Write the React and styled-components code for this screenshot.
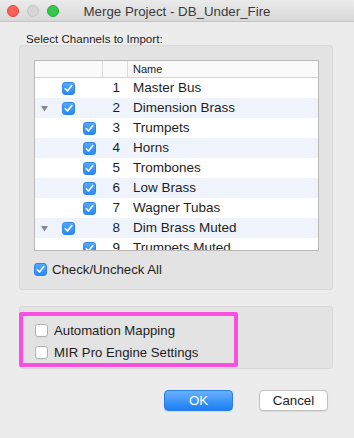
import React from "react";
import styled, { createGlobalStyle } from "styled-components";

const Global = createGlobalStyle`
  html, body { margin: 0; padding: 0; background: #ececec; }
  body { font-family: "Liberation Sans", Arial, sans-serif; color: #1e1e1e; }
  * { box-sizing: border-box; }
`;

const Window = styled.div`
  width: 354px;
  height: 438px;
  background: #ececec;
  display: flex;
  flex-direction: column;
  overflow: hidden;
`;

const TitleBar = styled.div`
  height: 22px;
  flex: none;
  display: grid;
  grid-template-columns: 1fr auto 1fr;
  align-items: center;
  background: linear-gradient(#ebebeb, #d8d8d8);
  border-bottom: 1px solid #c4c4c4;
`;

const Lights = styled.div`
  display: flex;
  gap: 8px;
  padding-left: 7px;
`;

const Light = styled.span`
  width: 12px;
  height: 12px;
  border-radius: 50%;
  background: ${(p) => p.$color};
  border: 1px solid ${(p) => p.$edge};
`;

const Title = styled.div`
  font-size: 13.3px;
  color: #3a3a3a;
  padding-top: 1px;
`;

const Content = styled.div`
  flex: 1;
  display: flex;
  flex-direction: column;
  padding: 10px 21px 0 19px;
`;

const Label = styled.div`
  font-size: 11.6px;
  padding-left: 7px;
  height: 13px;
  line-height: 13px;
`;

const Group = styled.div`
  margin-top: ${(p) => p.$mt}px;
  height: ${(p) => p.$h}px;
  background: #e3e3e3;
  border: 1px solid #d9d9d9;
  border-radius: 3px;
  display: flex;
  flex-direction: column;
  padding: ${(p) => p.$pad};
`;

const Table = styled.div`
  height: 191px;
  background: #fff;
  border: 1px solid #b9b9b9;
  overflow: hidden;
  display: flex;
  flex-direction: column;
`;

const Grid = styled.div`
  display: grid;
  grid-template-columns: 68px 25px 1fr;
  height: ${(p) => p.$h}px;
  flex: none;
  align-items: center;
  background: ${(p) => (p.$alt ? "#eef3fc" : "#fff")};
`;

const HeadRow = styled(Grid)`
  background: #fafafa;
  border-bottom: 1px solid #d4d4d4;
  font-size: 11px;
  color: #222;
`;

const HeadCell = styled.div`
  height: 100%;
  display: flex;
  align-items: center;
  padding-left: ${(p) => p.$pl || 0}px;
  border-right: ${(p) => (p.$sep ? "1px solid #dcdcdc" : "none")};
`;

const ToggleCell = styled.div`
  display: flex;
  align-items: center;
  height: 100%;
  position: relative;
`;

const Tri = styled.svg`
  position: absolute;
  left: 6px;
  top: 8px;
`;

const NumCell = styled.div`
  text-align: right;
  padding-right: 8px;
  font-size: 13.5px;
  line-height: 20px;
`;

const NameCell = styled.div`
  padding-left: 5px;
  font-size: 13.5px;
  line-height: 20px;
  white-space: nowrap;
`;

const Box = styled.span`
  width: 13px;
  height: 13px;
  flex: none;
  border-radius: 3px;
  display: inline-flex;
  align-items: center;
  justify-content: center;
  margin-left: ${(p) => p.$ml || 0}px;
  background: ${(p) => (p.$on ? "linear-gradient(#55a8fc, #2b89f6)" : "#fff")};
  border: 1px solid ${(p) => (p.$on ? "#2f86ea" : "#b3b3b3")};
  box-shadow: ${(p) => (p.$on ? "none" : "0 1px 0 rgba(0,0,0,0.04)")};
`;

const Check = () => (
  <svg width="9" height="9" viewBox="0 0 9 9">
    <path d="M1.3 4.8 L3.5 7 L7.8 1.6" fill="none" stroke="#fff" strokeWidth="1.6" strokeLinecap="round" strokeLinejoin="round" />
  </svg>
);

const CheckBox = ({ on, ml }) => (
  <Box $on={on} $ml={ml}>{on && <Check />}</Box>
);

const OptRow = styled.label`
  display: flex;
  align-items: center;
  gap: 6px;
  font-size: 13.2px;
  height: ${(p) => p.$h || 22}px;
`;

const CheckAllRow = styled(OptRow)`
  margin-top: 11px;
  gap: 5px;
`;

const Highlight = styled.div`
  width: 219px;
  height: 55px;
  border: 4px solid #f94fe0;
  border-radius: 2px;
  display: flex;
  flex-direction: column;
  padding: 4px 0 0 12px;
  margin-left: -1px;
`;

const Buttons = styled.div`
  display: flex;
  justify-content: flex-end;
  gap: 26px;
  margin-top: 21px;
  padding-right: 5px;
`;

const Button = styled.button`
  width: 69px;
  height: 21px;
  border-radius: 4px;
  font-family: inherit;
  font-size: 13.3px;
  padding: 0;
  color: ${(p) => (p.$primary ? "#fff" : "#222")};
  background: ${(p) => (p.$primary ? "linear-gradient(#69b1fb, #1a7ff5)" : "#fff")};
  border: 1px solid ${(p) => (p.$primary ? "#2a80e8" : "#c2c2c2")};
  box-shadow: 0 1px 1px rgba(0,0,0,0.08);
`;

const rows = [
  { n: 1, name: "Master Bus", level: 0 },
  { n: 2, name: "Dimension Brass", level: 0, tri: true },
  { n: 3, name: "Trumpets", level: 1 },
  { n: 4, name: "Horns", level: 1 },
  { n: 5, name: "Trombones", level: 1 },
  { n: 6, name: "Low Brass", level: 1 },
  { n: 7, name: "Wagner Tubas", level: 1 },
  { n: 8, name: "Dim Brass Muted", level: 0, tri: true },
  { n: 9, name: "Trumpets Muted", level: 1 },
];

export default function App() {
  return (
    <Window>
      <Global />
      <TitleBar>
        <Lights>
          <Light $color="#fc605b" $edge="#de4640" />
          <Light $color="#d6d6d6" $edge="#c4c4c4" />
          <Light $color="#34c84a" $edge="#27a83a" />
        </Lights>
        <Title>Merge Project - DB_Under_Fire</Title>
        <div />
      </TitleBar>
      <Content>
        <Label>Select Channels to Import:</Label>
        <Group $mt={0} $h={245} $pad="14px 13px 0 14px">
          <Table>
            <HeadRow $h={17}>
              <HeadCell $sep />
              <HeadCell $sep />
              <HeadCell $pl={5}>Name</HeadCell>
            </HeadRow>
            {rows.map((r, i) => (
              <Grid key={r.n} $h={20} $alt={i % 2 === 1}>
                <ToggleCell>
                  {r.tri && (
                    <Tri width="7" height="6" viewBox="0 0 7 6">
                      <polygon points="0,0 7,0 3.5,5.5" fill="#8a8a8a" />
                    </Tri>
                  )}
                  <CheckBox on ml={r.level ? 48 : 27} />
                </ToggleCell>
                <NumCell>{r.n}</NumCell>
                <NameCell>{r.name}</NameCell>
              </Grid>
            ))}
          </Table>
          <CheckAllRow $h={14}>
            <CheckBox on />
            Check/Uncheck All
          </CheckAllRow>
        </Group>
        <Group $mt={16} $h={63} $pad="5px 0 0 0">
          <Highlight>
            <OptRow>
              <CheckBox />
              Automation Mapping
            </OptRow>
            <OptRow>
              <CheckBox />
              MIR Pro Engine Settings
            </OptRow>
          </Highlight>
        </Group>
        <Buttons>
          <Button $primary>OK</Button>
          <Button>Cancel</Button>
        </Buttons>
      </Content>
    </Window>
  );
}
